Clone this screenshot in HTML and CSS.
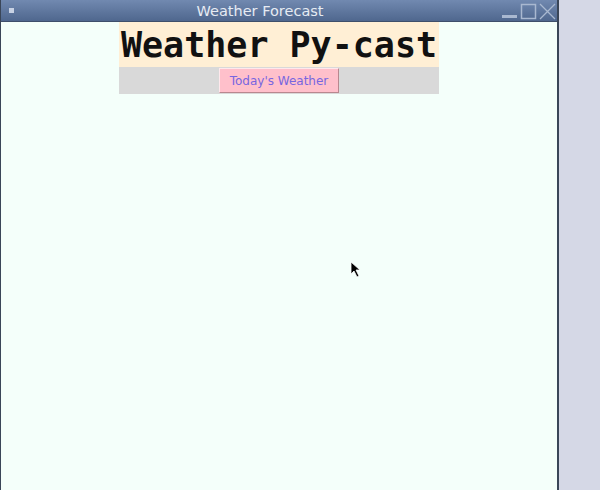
FILE: index.html
```html
<!DOCTYPE html>
<html>
<head>
<meta charset="utf-8">
<link rel="stylesheet" href="styles.css">
</head>
<body>
<div class="screen">
  <div class="window">
    <div class="titlebar">
      <span class="menu-dot"></span>
      <span class="title">Weather Forecast</span>
      <div class="controls">
        <svg width="56" height="20" viewBox="0 0 56 20">
          <rect x="1" y="14" width="15" height="3" fill="#a9b8d0"/>
          <rect x="20.5" y="3.5" width="14" height="14" fill="none" stroke="#a9b8d0" stroke-width="1.5"/>
          <path d="M39 3 L54 18 M54 3 L39 18" stroke="#a9b8d0" stroke-width="1.3"/>
        </svg>
      </div>
    </div>
    <div class="content">
      <div class="app">
        <h1 class="heading">Weather Py-cast</h1>
        <div class="bar">
          <button class="btn">Today's Weather</button>
        </div>
      </div>
    </div>
    <svg class="cursor" width="12" height="18" viewBox="0 0 12 18">
      <path d="M1 1 L1 13 L4 10 L7 16 L9 15 L6 9 L10 9 Z" fill="#000" stroke="#fff" stroke-width="0.8"/>
    </svg>
  </div>
  <div class="desktop"></div>
</div>
</body>
</html>
```
FILE: styles.css
```css
html, body {
  margin: 0;
  padding: 0;
}
body {
  width: 600px;
  height: 490px;
  overflow: hidden;
  background: #d5d8e6;
}
.screen {
  display: flex;
  height: 490px;
}
.window {
  position: relative;
  width: 556px;
  border-left: 1px solid #3a4658;
  border-right: 2px solid #3a4658;
  display: flex;
  flex-direction: column;
  background: #f4fffa;
}
.desktop {
  flex: 1;
  background: #d5d8e6;
}
.titlebar {
  position: relative;
  height: 21px;
  background: linear-gradient(#7189b0, #4f678e);
  border-bottom: 1px solid #3e4f6b;
  display: flex;
  align-items: center;
  justify-content: center;
}
.menu-dot {
  position: absolute;
  left: 8px;
  top: 8px;
  width: 5px;
  height: 5px;
  background: #c8d2e4;
}
.title {
  font-family: "DejaVu Sans", sans-serif;
  font-size: 14.5px;
  color: #e6ebf3;
  margin-right: 38px;
}
.controls {
  position: absolute;
  right: 0;
  top: 1px;
  display: flex;
}
.content {
  flex: 1;
  display: flex;
  justify-content: center;
}
.app {
  width: 320px;
  display: flex;
  flex-direction: column;
}
.heading {
  margin: 0;
  height: 45px;
  background: #ffefd5;
  font-family: "DejaVu Sans Mono", monospace;
  font-weight: bold;
  font-size: 35px;
  line-height: 47px;
  text-align: center;
  color: #111;
  white-space: nowrap;
  overflow: hidden;
}
.bar {
  height: 27px;
  background: #d9d9d9;
  display: flex;
  justify-content: center;
  align-items: center;
}
.btn {
  width: 120px;
  height: 25px;
  margin: 0;
  padding: 0;
  background: #ffc0cb;
  color: #7866e0;
  font-family: "DejaVu Sans", sans-serif;
  font-size: 12px;
  border: 1px solid;
  border-color: #ffe8ec #b8888f #b8888f #ffe8ec;
}
.cursor {
  position: absolute;
  left: 349px;
  top: 261px;
}
```
